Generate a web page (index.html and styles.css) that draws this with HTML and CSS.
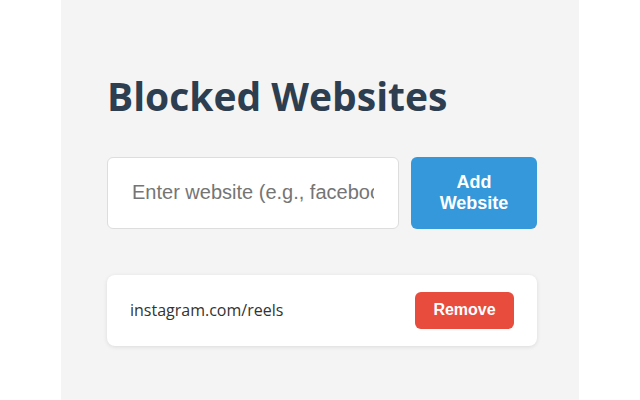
FILE: index.html
```html
<!DOCTYPE html>
<html lang="en">
  <head>
    <meta charset="UTF-8" />
    <meta name="viewport" content="width=device-width, initial-scale=1.0" />
    <title>Blocked Websites</title>
    <link rel="stylesheet" href="styles.css">
  </head>
  <body>
    <div class="container">
      <h1 class="title">Blocked Websites</h1>
      <div class="add-row">
        <input
          type="text"
          id="siteInput"
          class="site-input"
          placeholder="Enter website (e.g., facebook.com)"
        />
        <button id="addBtn" class="btn-add">Add Website</button>
      </div>
      <ul id="siteList" class="site-list">
        <li class="site-item">
          <span class="site-name">instagram.com/reels</span>
          <button class="btn-remove">Remove</button>
        </li>
      </ul>
    </div>
  </body>
</html>
```

FILE: styles.css
```css
* {
  margin: 0;
  padding: 0;
  box-sizing: border-box;
}

body {
  background-color: #ffffff;
  font-family: "Open Sans", "Segoe UI", sans-serif;
}

.container {
  width: 518px;
  min-height: 100vh;
  margin: 0 auto;
  padding: 73px 42px 20px 46px;
  background-color: #f4f4f4;
}

.title {
  color: #2c3e50;
  font-size: 39px;
  font-weight: 700;
  line-height: 1.2;
  margin-bottom: 37px;
}

.add-row {
  display: flex;
  gap: 12px;
  margin-bottom: 46px;
}

.site-input {
  flex: 1;
  min-width: 0;
  padding: 12px 24px;
  border: 1px solid #dddddd;
  border-radius: 6px;
  font-family: "Liberation Sans", Arial, sans-serif;
  font-size: 20px;
  color: #333;
  background: #fff;
}

.site-input::placeholder {
  color: #757575;
}

.btn-add {
  width: 126px;
  padding: 15px 20px;
  background-color: #3498db;
  color: #fff;
  border: none;
  border-radius: 6px;
  font-family: "Liberation Sans", Arial, sans-serif;
  font-size: 18px;
  font-weight: 700;
  line-height: 21px;
  cursor: pointer;
}

.site-list {
  list-style: none;
}

.site-item {
  display: flex;
  justify-content: space-between;
  align-items: center;
  padding: 17px 23px;
  background-color: #fff;
  border-radius: 8px;
  box-shadow: 0 1px 4px rgba(0, 0, 0, 0.1);
}

.site-name {
  font-size: 16px;
  color: #333;
}

.btn-remove {
  width: 99px;
  height: 37px;
  background-color: #e74c3c;
  color: #fff;
  border: none;
  border-radius: 6px;
  font-family: "Liberation Sans", Arial, sans-serif;
  font-size: 16px;
  font-weight: 700;
  cursor: pointer;
}
```
